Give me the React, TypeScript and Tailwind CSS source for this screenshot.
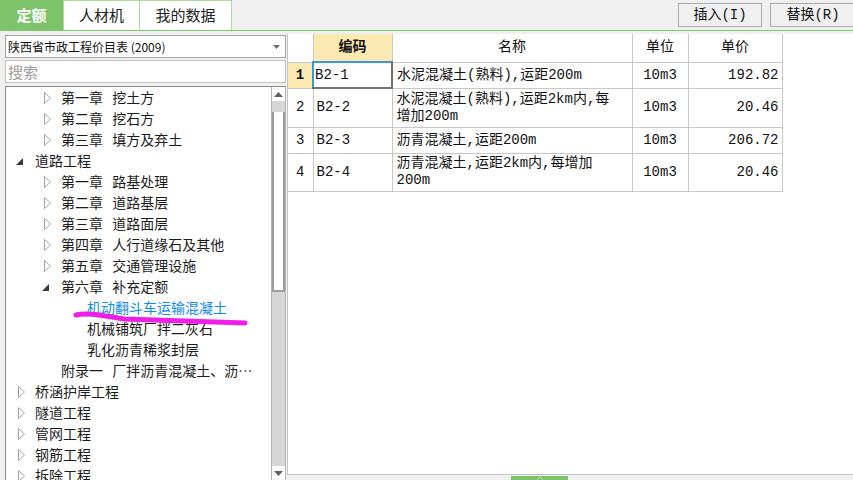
import React from "react";

type TreeNode = {
  level: 0 | 1 | 2;
  state?: "open" | "closed";
  text: string;
  active?: boolean;
};

const tree: TreeNode[] = [
  { level: 1, state: "closed", text: "第一章 挖土方" },
  { level: 1, state: "closed", text: "第二章 挖石方" },
  { level: 1, state: "closed", text: "第三章 填方及弃土" },
  { level: 0, state: "open", text: "道路工程" },
  { level: 1, state: "closed", text: "第一章 路基处理" },
  { level: 1, state: "closed", text: "第二章 道路基层" },
  { level: 1, state: "closed", text: "第三章 道路面层" },
  { level: 1, state: "closed", text: "第四章 人行道缘石及其他" },
  { level: 1, state: "closed", text: "第五章 交通管理设施" },
  { level: 1, state: "open", text: "第六章 补充定额" },
  { level: 2, text: "机动翻斗车运输混凝土", active: true },
  { level: 2, text: "机械铺筑厂拌二灰石" },
  { level: 2, text: "乳化沥青稀浆封层" },
  { level: 1, text: "附录一 厂拌沥青混凝土、沥青稳定碎石" },
  { level: 0, state: "closed", text: "桥涵护岸工程" },
  { level: 0, state: "closed", text: "隧道工程" },
  { level: 0, state: "closed", text: "管网工程" },
  { level: 0, state: "closed", text: "钢筋工程" },
  { level: 0, state: "closed", text: "拆除工程" },
];

const indent = {
  0: "pl-[12px]",
  1: "pl-[38px]",
  2: "pl-[64px]",
};

const rows = [
  { no: "1", code: "B2-1", name: ["水泥混凝土(熟料),运距200m"], unit: "10m3", price: "192.82", h: "h-[26px]" },
  { no: "2", code: "B2-2", name: ["水泥混凝土(熟料),运距2km内,每", "增加200m"], unit: "10m3", price: "20.46", h: "h-[39px]" },
  { no: "3", code: "B2-3", name: ["沥青混凝土,运距200m"], unit: "10m3", price: "206.72", h: "h-[26px]" },
  { no: "4", code: "B2-4", name: ["沥青混凝土,运距2km内,每增加", "200m"], unit: "10m3", price: "20.46", h: "h-[38px]" },
];

const cjk = "font-['Noto_Sans_CJK_SC',sans-serif]";
const mono = "font-['Liberation_Mono','Noto_Sans_CJK_SC',monospace]";

const Closed = () => (
  <svg width="8" height="12" viewBox="0 0 8 12">
    <polygon points="0.5,0.5 6.5,6 0.5,11.5" fill="white" stroke="#a3a3a3" />
  </svg>
);

const Open = () => (
  <svg width="8" height="8" viewBox="0 0 8 8" className="-ml-[2px] mt-[2px]">
    <polygon points="7,0 7,7 0,7" fill="#3a3a3a" />
  </svg>
);

const TreeRow = ({ node }: { node: TreeNode }) => (
  <div className={`flex h-[21px] shrink-0 items-center pr-[12px] ${indent[node.level]}`}>
    <span className="flex w-[17px] shrink-0 items-center">
      {node.state === "closed" && <Closed />}
      {node.state === "open" && <Open />}
    </span>
    <span
      className={`truncate whitespace-pre text-[14px] leading-[21px] [word-spacing:6px] ${
        node.active ? "text-[#0f8cf0]" : "text-[#1c1c1c]"
      }`}
    >
      {node.text}
    </span>
  </div>
);

const Scrollbar = () => (
  <div className="flex w-[15px] shrink-0 flex-col border-l border-r border-[#b4b4b4] bg-[#d6d6d6]">
    <div className="flex h-[14px] items-center justify-center bg-white">
      <svg width="9" height="5" viewBox="0 0 9 5">
        <polygon points="0,5 4.5,0 9,5" fill="#606060" />
      </svg>
    </div>
    <div className="h-[11px]" />
    <div className="h-[180px] border-x-2 border-b-2 border-[#9d9d9d] bg-white" />
    <div className="flex-1" />
    <div className="flex h-[14px] items-center justify-center bg-white">
      <svg width="9" height="5" viewBox="0 0 9 5">
        <polygon points="0,0 4.5,5 9,0" fill="#606060" />
      </svg>
    </div>
  </div>
);

export default function App() {
  return (
    <div className={`relative flex h-[480px] w-[853px] flex-col overflow-hidden bg-[#f0f0f0] ${cjk}`}>
      {/* top bar */}
      <div className="flex h-[31px] shrink-0 border-b border-[#7dcb69]">
        <div className="flex h-[30px] w-[63px] items-center justify-center bg-[#7cc36a] text-[15px] font-bold text-white">
          定额
        </div>
        <div className="flex h-[30px] w-[77px] items-center justify-center border-x border-t border-[#aadd98] bg-white text-[15px] text-[#222]">
          人材机
        </div>
        <div className="flex h-[30px] w-[92px] items-center justify-center border-r border-t border-[#aadd98] bg-white text-[15px] text-[#222]">
          我的数据
        </div>
        <div className="ml-auto mr-[-3px] flex gap-[8px] pt-[3px]">
          <button className={`h-[24px] w-[84px] border border-[#adadad] bg-[#f0f0f0] text-[14px] text-[#111] ${mono}`}>
            插入(I)
          </button>
          <button className={`h-[24px] w-[86px] border border-[#adadad] bg-[#f0f0f0] text-[14px] text-[#111] ${mono}`}>
            替换(R)
          </button>
        </div>
      </div>

      {/* body */}
      <div className="flex min-h-0 flex-1">
        {/* left panel */}
        <div className="flex w-[286px] shrink-0 flex-col pl-[5px] pt-[4px]">
          <div className="flex h-[23px] shrink-0 items-center justify-between border border-[#a5a5a5] bg-white pl-[2px] pr-[5px]">
            <span className="text-[12px] leading-[21px] text-[#111]">陕西省市政工程价目表 (2009)</span>
            <svg width="7" height="4" viewBox="0 0 7 4">
              <polygon points="0,0 7,0 3.5,4" fill="#707070" />
            </svg>
          </div>
          <div className="mt-[2px] flex h-[23px] shrink-0 items-center border border-[#c2c2c2] bg-white pl-[2px]">
            <span className="text-[15px] leading-[21px] text-[#a0a0a0]">搜索</span>
          </div>
          <div className="mt-[3px] flex min-h-0 flex-1 border-l border-t border-[#8a8a8a] bg-white">
            <div className="flex min-w-0 flex-1 flex-col overflow-hidden">
              {tree.map((n, i) => (
                <TreeRow key={i} node={n} />
              ))}
            </div>
            <Scrollbar />
          </div>
        </div>

        {/* right panel */}
        <div className="flex min-w-0 flex-1 flex-col pt-[3px]">
          <div className="ml-[1px] flex-1 border-b border-l border-[#c6c6c6] bg-white">
            <table className={`table-fixed border-collapse text-[14px] text-[#111] ${mono}`}>
              <colgroup>
                <col className="w-[25px]" />
                <col className="w-[79px]" />
                <col className="w-[240px]" />
                <col className="w-[56px]" />
                <col className="w-[94px]" />
              </colgroup>
              <thead>
                <tr className="h-[28px]">
                  <th className="border-b border-r border-[#c8c8c8] font-normal" />
                  <th className="border-b border-r border-[#c8c8c8] bg-[#fde9b2] font-bold">编码</th>
                  <th className="border-b border-r border-[#c8c8c8] font-normal">名称</th>
                  <th className="border-b border-r border-[#c8c8c8] font-normal">单位</th>
                  <th className="border-b border-r border-[#c8c8c8] font-normal">单价</th>
                </tr>
              </thead>
              <tbody>
                {rows.map((r, i) => (
                  <tr key={r.no} className={r.h}>
                    <td
                      className={`border-b border-r border-[#c8c8c8] text-center ${
                        i === 0 ? "bg-[#fde9b2] font-bold" : ""
                      }`}
                    >
                      {r.no}
                    </td>
                    <td
                      className={
                        i === 0
                          ? "border-2 border-b-[#707070] border-l-[#3a9ad6] border-r-[#707070] border-t-[#3a9ad6] pl-[1px]"
                          : "border-b border-r border-[#c8c8c8] pl-[3px]"
                      }
                    >
                      {r.code}
                    </td>
                    <td className="border-b border-r border-[#c8c8c8] pl-[4px] leading-[17px]">
                      {r.name.map((line, k) => (
                        <div key={k}>{line}</div>
                      ))}
                    </td>
                    <td className="border-b border-r border-[#c8c8c8] text-center">{r.unit}</td>
                    <td className="border-b border-r border-[#c8c8c8] pr-[3px] text-right">{r.price}</td>
                  </tr>
                ))}
              </tbody>
            </table>
          </div>
          <div className="flex h-[5px] shrink-0 items-end">
            <div className="ml-[225px] flex h-[4px] w-[57px] justify-center bg-[#7cc36a]">
              <svg width="8" height="4" viewBox="0 0 8 4">
                <polyline points="1,4 4,1 7,4" fill="none" stroke="#b8e2ad" />
              </svg>
            </div>
          </div>
        </div>
      </div>

      {/* highlighter stroke */}
      <svg className="pointer-events-none absolute left-0 top-0" width="853" height="480">
        <path
          d="M76 315 C 88 312, 104 316, 124 319 L 245 323"
          fill="none"
          stroke="#f01ee6"
          strokeWidth="5"
          strokeLinecap="round"
        />
      </svg>
    </div>
  );
}
